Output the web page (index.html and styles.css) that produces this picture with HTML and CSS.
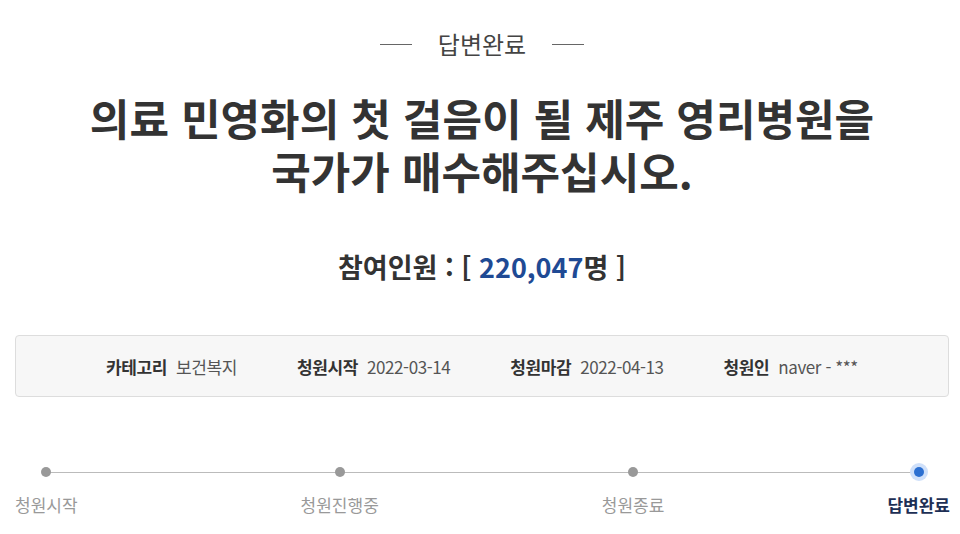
FILE: index.html
```html
<!DOCTYPE html>
<html lang="ko">
<head>
<meta charset="utf-8">
<link rel="stylesheet" href="styles.css">
</head>
<body>
<div class="page">
  <div class="status"><span class="status-line"></span><span class="status-text">답변완료</span><span class="status-line"></span></div>
  <h1 class="title">의료 민영화의 첫 걸음이 될 제주 영리병원을<br>국가가 매수해주십시오.</h1>
  <div class="count">참여인원 : [ <span class="num">220,047</span>명 ]</div>
  <div class="info">
    <div class="item"><span class="label">카테고리</span><span class="value">보건복지</span></div>
    <div class="item"><span class="label">청원시작</span><span class="value">2022-03-14</span></div>
    <div class="item"><span class="label">청원마감</span><span class="value">2022-04-13</span></div>
    <div class="item"><span class="label">청원인</span><span class="value">naver - ***</span></div>
  </div>
  <div class="steps">
    <div class="step"><span class="dot"></span><span class="step-label">청원시작</span></div>
    <div class="step"><span class="dot"></span><span class="step-label">청원진행중</span></div>
    <div class="step"><span class="dot"></span><span class="step-label">청원종료</span></div>
    <div class="step active"><span class="dot"></span><span class="step-label">답변완료</span></div>
  </div>
</div>
</body>
</html>
```
FILE: styles.css
```css
html, body { margin: 0; padding: 0; background: #fff; }
body { font-family: "Noto Sans CJK KR", "Noto Sans", sans-serif; color: #333; }
.page { width: 960px; padding: 0 11px 0 15px; box-sizing: border-box; }
.status { display: flex; justify-content: center; align-items: center; gap: 26px; padding-top: 28px; height: 32px; }
.status-line { width: 32px; height: 1px; background: #666; }
.status-text { font-size: 24px; color: #444; line-height: 32px; }
.title { margin: 31px 0 0; text-align: center; font-size: 43px; font-weight: 700; line-height: 53px; color: #333; }
.count { margin-top: 52px; text-align: center; font-size: 27px; font-weight: 700; color: #333; line-height: 36px; }
.count .num { color: #1f4a94; }
.info { margin-top: 50px; height: 62px; background: #f7f7f7; border: 1px solid #ddd; border-radius: 4px; display: flex; justify-content: center; align-items: center; gap: 60px; box-sizing: border-box; }
.item { display: flex; gap: 9px; font-size: 17px; color: #444; letter-spacing: -0.4px; }
.label { font-weight: 700; color: #333; }
.value { color: #555; }
.steps { position: relative; display: flex; justify-content: space-between; margin-top: 70px; margin-right: -1px; }
.steps::before { content: ""; position: absolute; left: 31px; right: 31px; top: 5px; height: 1px; background: #bbb; }
.step { position: relative; display: flex; flex-direction: column; align-items: center; gap: 17px; }
.dot { width: 10px; height: 10px; border-radius: 50%; background: #999; }
.step-label { font-size: 17px; color: #999; line-height: 22px; }
.step.active .dot { background: #2b6fd1; box-shadow: 0 0 0 4px #cfe0fa; }
.step.active .step-label { color: #1d2f55; font-weight: 700; }
```
